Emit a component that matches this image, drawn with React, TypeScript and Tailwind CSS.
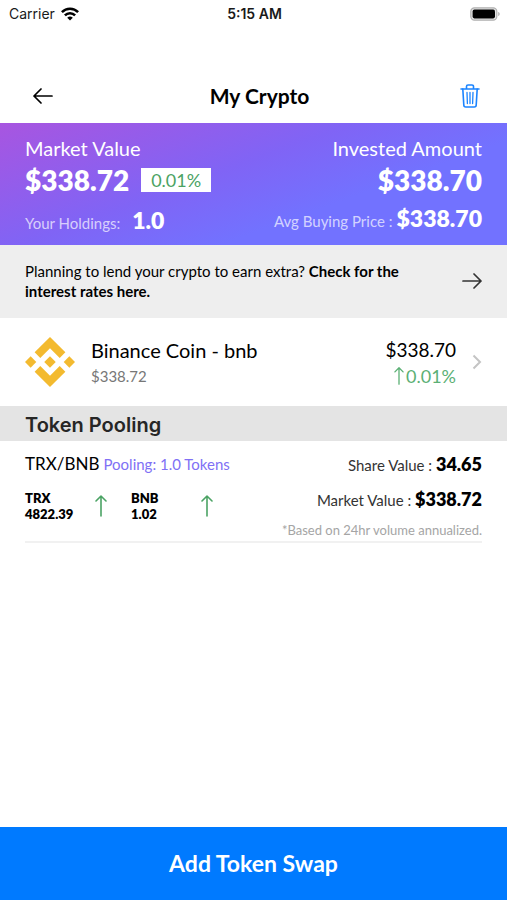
const ArrowIcon = ({ className }: { className?: string }) => (
  <svg
    className={className}
    viewBox="0 0 20 16"
    fill="none"
    stroke="currentColor"
    strokeWidth="1.7"
    strokeLinecap="round"
    strokeLinejoin="round"
    aria-hidden="true"
  >
    <path d="M1 8h18M12 1l7 7-7 7" />
  </svg>
);

const UpArrow = ({ className }: { className?: string }) => (
  <svg
    className={className}
    viewBox="0 0 12 22"
    fill="none"
    stroke="currentColor"
    strokeWidth="1.6"
    strokeLinecap="round"
    strokeLinejoin="round"
    aria-hidden="true"
  >
    <path d="M6 21V1M1 6l5-5 5 5" />
  </svg>
);

const StatusBar = () => (
  <div className="grid grid-cols-3 items-center h-7 pl-[9px] pr-[7px] font-['Inter',sans-serif] text-sm text-[#1a1a1a]">
    <div className="flex items-center gap-1.5">
      <span>Carrier</span>
      <svg className="w-[18px] h-[14px]" viewBox="0 0 18 14" aria-hidden="true">
        <g fill="none" stroke="#000" strokeWidth="2.5">
          <path d="M.9 5.2a11.3 11.3 0 0 1 16.2 0" />
          <path d="M3.9 8.4a7 7 0 0 1 10.2 0" />
        </g>
        <path d="M6.2 10.8a4 4 0 0 1 5.6 0L9 13.6z" fill="#000" />
      </svg>
    </div>
    <span className="text-center font-semibold">5:15 AM</span>
    <svg
      className="justify-self-end w-[30px] h-[14px]"
      viewBox="0 0 30 14"
      aria-hidden="true"
    >
      <rect x="0.8" y="0.8" width="26" height="12.4" rx="3.6" fill="#e4e4e4" stroke="#b0b0b0" strokeWidth="1.2" />
      <rect x="2.6" y="2.6" width="22.4" height="8.8" rx="1.8" fill="#000" />
      <path d="M28.2 5v4c.9-.4 1.5-1.1 1.5-2s-.6-1.6-1.5-2z" fill="#b0b0b0" />
    </svg>
  </div>
);

const Header = () => (
  <header className="grid grid-cols-3 items-center pt-[52px] pb-[11px] pl-[33px] pr-[21px]">
    <button type="button" aria-label="Back" className="justify-self-start py-2">
      <ArrowIcon className="w-5 h-4 rotate-180" />
    </button>
    <h1 className="text-center text-[21px] font-bold whitespace-nowrap">
      My Crypto
    </h1>
    <button
      type="button"
      aria-label="Delete"
      className="justify-self-end p-1 text-[#1b84ff]"
    >
      <svg
        className="w-6 h-6"
        viewBox="0 0 24 24"
        fill="none"
        stroke="currentColor"
        strokeWidth="1.6"
        strokeLinecap="round"
        strokeLinejoin="round"
        aria-hidden="true"
      >
        <path d="M3 5h18M8.5 5V2.5A1.5 1.5 0 0 1 10 1h4a1.5 1.5 0 0 1 1.5 1.5V5" />
        <path d="M4.8 5l1 16a2 2 0 0 0 2 2h8.4a2 2 0 0 0 2-2l1-16" />
        <path d="M9 8.5l.4 11M12 8.5v11M15 8.5l-.4 11" strokeWidth="1.3" />
      </svg>
    </button>
  </header>
);

const Summary = () => (
  <section className="flex justify-between px-[25px] pt-[11px] pb-[9px] text-white bg-linear-[160deg,#a855e0_0%,#8064f5_42%,#7272ff_66%,#7272ff_100%]">
    <div>
      <p className="text-xl leading-7">Market Value</p>
      <div className="flex items-center gap-3 h-9">
        <span className="text-[28px] font-extrabold">$338.72</span>
        <span className="px-2.5 bg-white text-[#4ba364] text-[18px] leading-6">
          0.01%
        </span>
      </div>
      <div className="flex items-baseline gap-3 pt-1.5">
        <span className="text-[15px] text-white/70">Your Holdings:</span>
        <span className="text-[23px] leading-8 font-extrabold">1.0</span>
      </div>
    </div>
    <div className="text-right">
      <p className="text-xl leading-7">Invested Amount</p>
      <p className="text-[28px] leading-9 font-extrabold">$338.70</p>
      <div className="flex items-baseline justify-end gap-1 pt-1">
        <span className="text-[15px] text-white/70">Avg Buying Price :</span>
        <span className="text-[23px] leading-8 font-extrabold">$338.70</span>
      </div>
    </div>
  </section>
);

const LendBanner = () => (
  <a
    href="#rates"
    className="flex items-center justify-between px-[25px] pt-4 pb-[17px] bg-[#eeeeee] text-[15px] leading-5"
  >
    <p className="max-w-[400px]">
      Planning to lend your crypto to earn extra?{" "}
      <strong className="font-bold">Check for the</strong>{" "}
      <strong className="font-bold">interest rates here.</strong>
    </p>
    <ArrowIcon className="shrink-0 w-5 h-4 text-[#333333]" />
  </a>
);

const BinanceLogo = () => (
  <svg className="w-[50px] h-[50px]" viewBox="0 0 126.6 126.6" fill="#f3ba2f" aria-hidden="true">
    <path d="M38.7 53.2l24.6-24.6 24.6 24.6 14.3-14.3L63.3 0 24.4 38.9z" />
    <path d="M0 63.3l14.3-14.3 14.3 14.3-14.3 14.3z" />
    <path d="M38.7 73.4l24.6 24.6 24.6-24.6 14.3 14.3-38.9 38.9-38.9-38.9z" />
    <path d="M98 63.3l14.3-14.3 14.3 14.3-14.3 14.3z" />
    <path d="M77.8 63.3L63.3 48.8 48.8 63.3l14.5 14.5z" />
  </svg>
);

const CoinRow = () => (
  <a href="#bnb" className="flex items-center px-[25px] py-[18px]">
    <BinanceLogo />
    <div className="flex-1 pl-4">
      <p className="text-xl leading-7">Binance Coin - bnb</p>
      <p className="text-[15px] leading-6 text-[#777777]">$338.72</p>
    </div>
    <div className="text-right">
      <p className="text-[19px] leading-7">$338.70</p>
      <p className="flex items-center justify-end gap-0.5 text-[18px] leading-6 text-[#5bb075]">
        <UpArrow className="w-2.5 h-[18px]" />
        0.01%
      </p>
    </div>
    <svg
      className="w-2.5 h-4 ml-4"
      viewBox="0 0 10 16"
      fill="none"
      stroke="#c4c4c4"
      strokeWidth="2"
      aria-hidden="true"
    >
      <path d="M1.5 1.5L8 8l-6.5 6.5" />
    </svg>
  </a>
);

const tokens = [
  { name: "TRX", amount: "4822.39" },
  { name: "BNB", amount: "1.02" },
];

const PoolRow = () => (
  <div className="mx-[25px] pt-[11px] pb-px flex justify-between border-b-2 border-[#f1f1f1]">
    <div>
      <p className="leading-6 whitespace-nowrap">
        <span className="text-[17px]">TRX/BNB</span>{" "}
        <span className="text-[15px] text-[#8070f5]">Pooling: 1.0 Tokens</span>
      </p>
      <div className="flex gap-6 pt-3.5">
        {tokens.map((token) => (
          <div key={token.name} className="flex items-center justify-between w-[82px]">
            <p className="text-[13px] leading-4 font-extrabold">
              {token.name}
              <br />
              {token.amount}
            </p>
            <UpArrow className="w-3 h-[22px] text-[#4ba364]" />
          </div>
        ))}
      </div>
    </div>
    <div className="text-right whitespace-nowrap">
      <p className="text-[15px] leading-6 text-[#333333]">
        Share Value : <span className="text-[18px] font-extrabold text-black">34.65</span>
      </p>
      <p className="pt-2.5 text-[15px] leading-6 text-[#333333]">
        Market Value : <span className="text-[18px] font-extrabold text-black">$338.72</span>
      </p>
      <p className="pt-2 text-[13px] leading-5 text-[#a5a5a5]">
        *Based on 24hr volume annualized.
      </p>
    </div>
  </div>
);

export default function App() {
  return (
    <div className="flex flex-col min-h-screen bg-white text-black font-['Lato',sans-serif]">
      <StatusBar />
      <Header />
      <main>
        <Summary />
        <LendBanner />
        <CoinRow />
        <h2 className="px-[25px] pt-[5px] pb-0.5 bg-[#e4e4e4] font-['Inter',sans-serif] text-xl leading-7 font-semibold text-[#262626]">
          Token Pooling
        </h2>
        <PoolRow />
      </main>
      <button
        type="button"
        className="mt-auto pt-[21px] pb-[22px] bg-[#007aff] text-[23px] leading-[30px] font-bold text-white"
      >
        Add Token Swap
      </button>
    </div>
  );
}
